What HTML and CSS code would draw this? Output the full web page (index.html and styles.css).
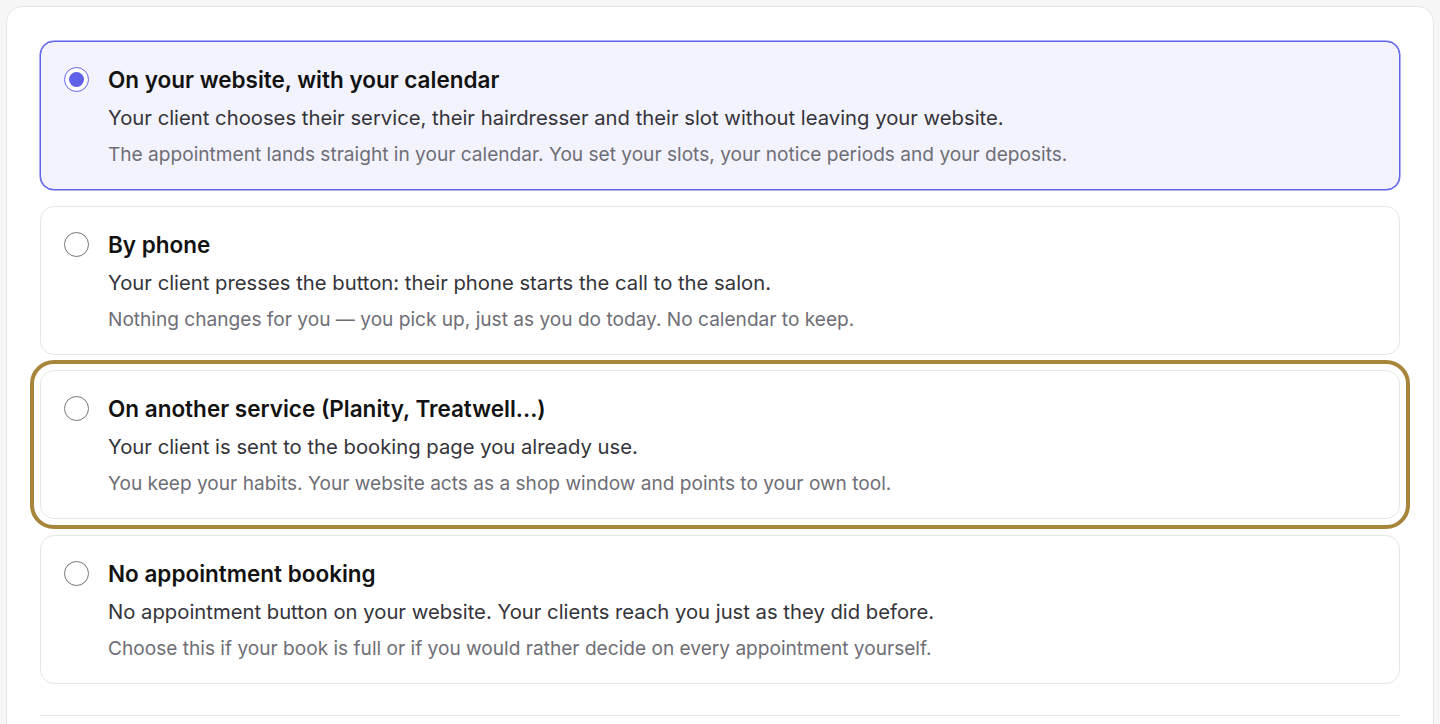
FILE: index.html
```html
<!DOCTYPE html>
<html lang="en">
<head>
  <meta charset="UTF-8" />
  <meta name="viewport" content="width=device-width, initial-scale=1" />
  <title>Booking options</title>
<link rel="stylesheet" href="styles.css">
</head>
<body>

<section class="panel">
  <div class="options">
    <label class="option is-selected">
      <input type="radio" name="booking" value="calendar" checked />
      <div class="option-text">
        <h3>On your website, with your calendar</h3>
        <p>Your client chooses their service, their hairdresser and their slot without leaving your website.</p>
        <p class="muted">The appointment lands straight in your calendar. You set your slots, your notice periods and your deposits.</p>
      </div>
    </label>

    <label class="option">
      <input type="radio" name="booking" value="phone" />
      <div class="option-text">
        <h3>By phone</h3>
        <p>Your client presses the button: their phone starts the call to the salon.</p>
        <p class="muted">Nothing changes for you — you pick up, just as you do today. No calendar to keep.</p>
      </div>
    </label>

    <label class="option is-focused">
      <input type="radio" name="booking" value="external" />
      <div class="option-text">
        <h3>On another service (Planity, Treatwell...)</h3>
        <p>Your client is sent to the booking page you already use.</p>
        <p class="muted">You keep your habits. Your website acts as a shop window and points to your own tool.</p>
      </div>
    </label>

    <label class="option">
      <input type="radio" name="booking" value="none" />
      <div class="option-text">
        <h3>No appointment booking</h3>
        <p>No appointment button on your website. Your clients reach you just as they did before.</p>
        <p class="muted">Choose this if your book is full or if you would rather decide on every appointment yourself.</p>
      </div>
    </label>
  </div>
  <hr class="divider" />
</section>

</body>
</html>
```

FILE: styles.css
```css
:root {
  --page: #f6f6f6;
  --card: #fff;
  --line: #e6e6e6;
  --text: #121212;
  --body: #34343a;
  --muted: #6e6e76;
  --indigo: #5f62e8;
  --indigo-bg: #f3f3fe;
  --gold: #a7853b;
}

* {
  box-sizing: border-box;
}

body {
  margin: 0;
  font-family: Inter, 'Noto Sans', sans-serif;
  background-color: var(--page);
  color: var(--text);
  overflow: hidden;
}

/* Grande carte blanche */
.panel {
  margin: 6px 6px 0 6px;
  background: var(--card);
  border: 1px solid var(--line);
  border-radius: 16px;
  padding: 34px 33px 0 33px;
  min-height: 760px;
}

.options {
  display: flex;
  flex-direction: column;
  gap: 15.5px;
}

.option {
  display: flex;
  align-items: flex-start;
  gap: 19px;
  padding: 24px 24px 21px 23px;
  border: 1px solid var(--line);
  border-radius: 14px;
  background: var(--card);
  cursor: pointer;
}

.option.is-selected {
  background: var(--indigo-bg);
  border-color: var(--indigo);
  box-shadow: 0 0 0 0.5px var(--indigo);
}

/* Focus clavier : anneau doré autour de la carte */
.option.is-focused {
  outline: 4px solid var(--gold);
  outline-offset: 6px;
}

.option input {
  margin: 1px 0 0 0;
  width: 25px;
  height: 25px;
  flex-shrink: 0;
  accent-color: var(--indigo);
}

.option-text h3 {
  margin: 0;
  font-size: 22.5px;
  line-height: 28px;
  font-weight: 600;
  color: var(--text);
}

.option-text p {
  margin: 9px 0 0;
  font-size: 20.25px;
  line-height: 30px;
  color: var(--body);
}

.option-text p.muted {
  margin-top: 7px;
  font-size: 19.1px;
  line-height: 28px;
  color: var(--muted);
}

.divider {
  margin: 31px 0 0;
  border: none;
  border-top: 1px solid var(--line);
}
```
